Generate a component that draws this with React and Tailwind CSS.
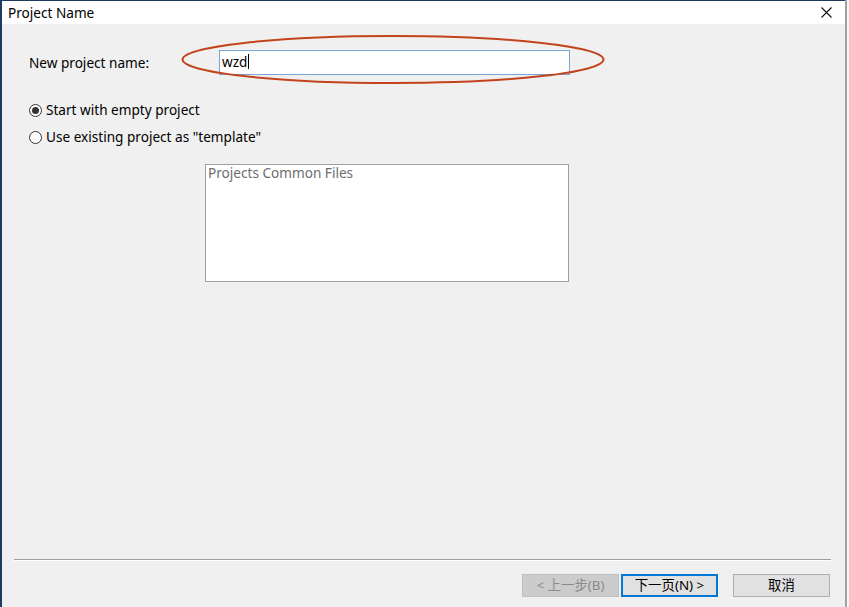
import React from "react";

export default function App() {
  const font = { fontFamily: '"Noto Sans", "Noto Sans CJK SC", sans-serif' };
  return (
    <div className="w-[849px] h-[607px] flex bg-white overflow-hidden text-[13.6px] text-black" style={font}>
      <div className="w-[845px] h-full flex flex-col border-l-2 border-t border-[#1b3b61]">
        {/* Title bar */}
        <div className="h-[23px] bg-white flex items-center justify-between pl-[6px] pr-[13px] shrink-0">
          <span className="text-[13.6px] leading-none">Project Name</span>
          <svg width="11" height="11" viewBox="0 0 11 11">
            <path d="M0.5 0.5 L10.5 10.5 M10.5 0.5 L0.5 10.5" stroke="#111" strokeWidth="1.1" fill="none" />
          </svg>
        </div>
        {/* Body */}
        <div className="flex-1 bg-[#f0f0f0] flex flex-col">
          <div className="relative mt-[26px] h-[24px] flex items-center">
            <span className="ml-[27px] w-[190px] mt-[2px]">New project name:</span>
            <div className="w-[351px] h-[25px] bg-white border border-[#7aa5d6] flex items-start pt-[3px] pl-[2px]">
              <span className="leading-[15px]">wzd</span>
              <span className="w-px h-[15px] bg-black ml-[1px]"></span>
            </div>
            <svg className="absolute left-[178px] top-[-16px]" width="426" height="52" viewBox="0 0 426 52">
              <ellipse cx="213" cy="25.5" rx="210.5" ry="23.5" fill="none" stroke="#c3441c" strokeWidth="2" />
            </svg>
          </div>
          <div className="mt-[28px] ml-[27px] h-[16px] flex items-center gap-[4px]">
            <span className="w-[13px] h-[13px] rounded-full border border-[#333] bg-white flex items-center justify-center">
              <span className="w-[7px] h-[7px] rounded-full bg-[#333]"></span>
            </span>
            <span>Start with empty project</span>
          </div>
          <div className="mt-[11px] ml-[27px] h-[16px] flex items-center gap-[4px]">
            <span className="w-[13px] h-[13px] rounded-full border border-[#333] bg-white"></span>
            <span>Use existing project as "template"</span>
          </div>
          <div className="mt-[19px] ml-[203px] w-[364px] h-[118px] bg-white border border-[#a0a0a0] pl-[2px]">
            <span className="text-[#6d6d6d] leading-[15px] block">Projects Common Files</span>
          </div>
          <div className="flex-1"></div>
          <div className="ml-[12px] w-[817px] h-px bg-[#a0a0a0]"></div>
          <div className="ml-[12px] w-[817px] h-px bg-white"></div>
          <div className="mt-[13px] mb-[10px] flex items-center text-[13.4px]">
            <div className="ml-[520px] w-[97px] h-[23px] bg-[#cccccc] border border-[#bfbfbf] flex items-center justify-center text-[#8a8a8a]">
              &lt; 上一步(B)
            </div>
            <div className="ml-[2px] w-[97px] h-[23px] bg-[#e1e1e1] border-2 border-[#0078d7] flex items-center justify-center">
              下一页(N) &gt;
            </div>
            <div className="ml-[15px] w-[97px] h-[23px] bg-[#e1e1e1] border border-[#adadad] flex items-center justify-center">
              取消
            </div>
          </div>
        </div>
      </div>
      <div className="w-[2px] h-full bg-[#a0a0a0]"></div>
      <div className="w-[2px] h-full bg-[#f7f7f7]"></div>
    </div>
  );
}
